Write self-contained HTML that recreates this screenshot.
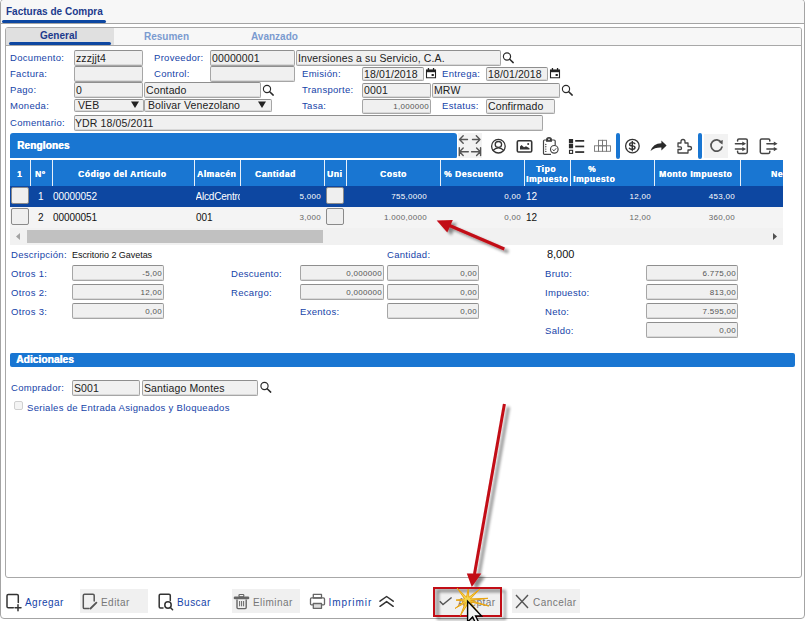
<!DOCTYPE html>
<html><head><meta charset="utf-8">
<style>
*{box-sizing:border-box;margin:0;padding:0}
html,body{width:807px;height:621px;overflow:hidden;background:#fff;font-family:"Liberation Sans",sans-serif;position:relative}
.a{position:absolute}
#outer{left:0;top:-1px;width:805px;height:620px;border:1px solid #a4a4a4;border-radius:4px;background:#fff}
#titlebar{left:0;top:0;width:803px;height:24px;background:#f7f7f7;border-bottom:1px solid #a4a4a4;border-radius:3px 3px 0 0}
.lbl{position:absolute;font-size:9.5px;letter-spacing:0.3px;color:#1543a8;white-space:nowrap;line-height:12px}
.inp{position:absolute;height:16px;border:1px solid #a6a6a6;border-top-color:#8e8e8e;border-radius:2px;background:#f0f0f0;font-size:10.5px;letter-spacing:0.12px;color:#222;line-height:14px;padding-left:1px;white-space:nowrap;overflow:hidden;box-shadow:inset 0 -1px 0 #d8d8d8}
.num{text-align:right;font-size:8px;letter-spacing:0.3px;padding-right:1px;color:#555;line-height:15px}
#panel{left:5px;top:27px;width:797px;height:551px;border:1px solid #a8a8a8;border-radius:3px;background:#fff}
#tabbar{left:0;top:0;width:795px;height:18px;background:#f7f7f7;border-bottom:1px solid #a8a8a8;border-radius:2px 2px 0 0}
.tab{position:absolute;font-size:10px;font-weight:bold;line-height:12px;top:3px}
.hdr{position:absolute;font-size:8.5px;font-weight:bold;color:#fff;letter-spacing:0.55px;text-shadow:0.25px 0 0 #fff;white-space:nowrap;line-height:10px}
.vs{position:absolute;top:160px;width:1px;height:26px;background:#e8f0fa}
.rv{position:absolute;font-size:10px;letter-spacing:-0.05px;white-space:nowrap;line-height:12px}
.sn{position:absolute;font-size:8px;letter-spacing:0.3px;white-space:nowrap;line-height:10px;text-align:right}
.cb{position:absolute;width:18px;height:17px;border:1px solid #8a8a8a;border-radius:2px;background:#efefef}
.btn{position:absolute;font-size:10px;letter-spacing:0.45px;line-height:12px;white-space:nowrap}
svg{position:absolute;overflow:visible}
</style></head><body>
<div id="outer" class="a"></div>
<div id="titlebar" class="a" style="left:1px;top:0"></div>
<div class="a" style="left:6px;top:6px;font-size:10px;font-weight:bold;color:#1c3a8c;line-height:12px;white-space:nowrap">Facturas de Compra</div>
<div class="a" style="left:2px;top:20px;width:104px;height:3px;background:#0d47a1;border-radius:2px"></div>

<div id="panel" class="a">
  <div id="tabbar" class="a"></div>
  <div class="a" style="left:0;top:0;width:108px;height:17px;background:#e0e0e0;border-radius:2px 0 0 0"></div>
  <div class="a" style="left:3px;top:14px;width:102px;height:3px;background:#0d47a1;border-radius:2px"></div>
  <div class="tab" style="left:34px;top:2px;color:#1c3a8c">General</div>
  <div class="tab" style="left:138px;color:#7b9bd0">Resumen</div>
  <div class="tab" style="left:245px;color:#7b9bd0">Avanzado</div>
</div>

<!-- form -->
<div class="lbl" style="left:10px;top:52px">Documento:</div>
<div class="inp" style="left:74px;top:50px;width:69px;height:16px;line-height:14px;">zzzjjt4</div>
<div class="lbl" style="left:154px;top:52px">Proveedor:</div>
<div class="inp" style="left:210px;top:50px;width:85px;height:16px;line-height:14px;">00000001</div>
<div class="inp" style="left:296px;top:50px;width:205px;height:16px;line-height:14px;">Inversiones a su Servicio, C.A.</div>
<div class="lbl" style="left:10px;top:68px">Factura:</div>
<div class="inp" style="left:74px;top:66px;width:69px;height:16px;line-height:14px;"></div>
<div class="lbl" style="left:154px;top:68px">Control:</div>
<div class="inp" style="left:210px;top:66px;width:85px;height:16px;line-height:14px;"></div>
<div class="lbl" style="left:302px;top:68px">Emisión:</div>
<div class="inp" style="left:362px;top:67px;width:62px;height:14px;line-height:12px;">18/01/2018</div>
<div class="lbl" style="left:442px;top:68px">Entrega:</div>
<div class="inp" style="left:486px;top:67px;width:62px;height:14px;line-height:12px;">18/01/2018</div>
<div class="lbl" style="left:10px;top:84px">Pago:</div>
<div class="inp" style="left:74px;top:82px;width:69px;height:16px;line-height:14px;">0</div>
<div class="inp" style="left:144px;top:82px;width:117px;height:16px;line-height:14px;">Contado</div>
<div class="lbl" style="left:302px;top:84px">Transporte:</div>
<div class="inp" style="left:362px;top:83px;width:69px;height:15px;line-height:13px;">0001</div>
<div class="inp" style="left:432px;top:83px;width:128px;height:15px;line-height:13px;">MRW</div>
<div class="lbl" style="left:10px;top:100px">Moneda:</div>
<div class="inp" style="left:74px;top:99px;width:70px;height:13px;line-height:11px;padding-left:3px">VEB</div>
<div class="inp" style="left:144px;top:99px;width:128px;height:13px;line-height:11px;padding-left:3px">Bolivar Venezolano</div>
<div class="lbl" style="left:302px;top:100px">Tasa:</div>
<div class="inp num" style="left:362px;top:99px;width:69px;height:15px;line-height:13px;">1,000000</div>
<div class="lbl" style="left:442px;top:100px">Estatus:</div>
<div class="inp" style="left:486px;top:99px;width:69px;height:15px;line-height:13px;">Confirmado</div>
<div class="lbl" style="left:10px;top:117px">Comentario:</div>
<div class="inp" style="left:74px;top:115px;width:469px;height:16px;line-height:14px;padding-left:0">YDR 18/05/2011</div>

<!-- Renglones -->
<div class="a" style="left:10px;top:133px;width:447px;height:26px;background:#1976d2;border-radius:3px 3px 3px 0"></div>
<div class="a" style="left:17px;top:140px;font-size:10px;font-weight:bold;color:#fff;line-height:12px;letter-spacing:0.15px;text-shadow:0.4px 0 0 #fff">Renglones</div>
<div class="a" style="left:10px;top:158px;width:773px;height:2px;background:#fff"></div>
<div class="a" style="left:10px;top:160px;width:773px;height:26px;background:#1976d2"></div>
<div class="vs" style="left:30px"></div>
<div class="vs" style="left:52px"></div>
<div class="vs" style="left:194px"></div>
<div class="vs" style="left:240px"></div>
<div class="vs" style="left:324px"></div>
<div class="vs" style="left:346px"></div>
<div class="vs" style="left:440px"></div>
<div class="vs" style="left:524px"></div>
<div class="vs" style="left:570px"></div>
<div class="vs" style="left:654px"></div>
<div class="vs" style="left:740px"></div>
<div class="hdr" style="left:17px;top:169px">1</div>
<div class="hdr" style="left:35px;top:169px">Nº</div>
<div class="hdr" style="left:78px;top:169px">Código del Artículo</div>
<div class="hdr" style="left:197px;top:169px">Almacén</div>
<div class="hdr" style="left:255px;top:169px">Cantidad</div>
<div class="hdr" style="left:327px;top:169px">Uni</div>
<div class="hdr" style="left:380px;top:169px">Costo</div>
<div class="hdr" style="left:444px;top:169px">% Descuento</div>
<div class="hdr" style="left:536px;top:164px">Tipo</div>
<div class="hdr" style="left:526px;top:174px">Impuesto</div>
<div class="hdr" style="left:588px;top:164px">%</div>
<div class="hdr" style="left:573px;top:174px">Impuesto</div>
<div class="hdr" style="left:659px;top:169px">Monto Impuesto</div>
<div class="hdr" style="left:771px;top:169px">Ne</div>
<div class="a" style="left:783px;top:133px;width:18px;height:120px;background:#fff"></div>

<div class="a" style="left:10px;top:186px;width:773px;height:21px;background:#0d47a1"></div>
<div class="a" style="left:10px;top:207px;width:773px;height:21px;background:#f4f4f4"></div>
<div class="cb" style="left:11px;top:187px"></div>
<div class="cb" style="left:11px;top:208px"></div>
<div class="cb" style="left:326px;top:187px"></div>
<div class="cb" style="left:326px;top:208px"></div>
<div class="rv" style="left:38px;top:191px;color:#fff">1</div>
<div class="rv" style="left:53px;top:191px;color:#fff">00000052</div>
<div class="rv" style="left:195.5px;top:191px;color:#fff;width:44px;overflow:hidden;letter-spacing:-0.2px">AlcdCentro</div>
<div class="sn" style="left:280px;top:192px;width:41px;color:#fff">5,000</div>
<div class="sn" style="left:360px;top:192px;width:67px;color:#fff">755,0000</div>
<div class="sn" style="left:460px;top:192px;width:61px;color:#fff">0,00</div>
<div class="rv" style="left:526px;top:191px;color:#fff;font-size:10px">12</div>
<div class="sn" style="left:590px;top:192px;width:61px;color:#fff">12,00</div>
<div class="sn" style="left:670px;top:192px;width:65px;color:#fff">453,00</div>

<div class="rv" style="left:38px;top:212px;color:#111">2</div>
<div class="rv" style="left:53px;top:212px;color:#111">00000051</div>
<div class="rv" style="left:196px;top:212px;color:#111">001</div>
<div class="sn" style="left:280px;top:213px;width:41px;color:#666">3,000</div>
<div class="sn" style="left:360px;top:213px;width:67px;color:#666">1.000,0000</div>
<div class="sn" style="left:460px;top:213px;width:61px;color:#666">0,00</div>
<div class="rv" style="left:526px;top:212px;color:#111;font-size:10px">12</div>
<div class="sn" style="left:590px;top:213px;width:61px;color:#666">12,00</div>
<div class="sn" style="left:670px;top:213px;width:65px;color:#666">360,00</div>

<div class="a" style="left:10px;top:228px;width:773px;height:17px;background:#f1f1f1"></div>
<div class="a" style="left:27px;top:230px;width:296px;height:13px;background:#c1c1c1"></div>
<svg style="left:0;top:0" width="807" height="621"><path d="M16 236.5 L20 233 L20 240 Z" fill="#a3a3a3"/><path d="M777 236.5 L773 233 L773 240 Z" fill="#505050"/></svg>

<!-- totals -->
<div class="lbl" style="left:11px;top:249px">Descripción:</div>
<div class="rv" style="left:72px;top:249px;color:#111;font-size:9px">Escritorio 2 Gavetas</div>
<div class="lbl" style="left:387px;top:249px">Cantidad:</div>
<div class="rv" style="left:547px;top:248px;color:#111;font-size:11px">8,000</div>
<div class="lbl" style="left:11px;top:268px">Otros 1:</div>
<div class="inp num" style="left:72px;top:265px;width:92px">-5,00</div>
<div class="lbl" style="left:11px;top:287px">Otros 2:</div>
<div class="inp num" style="left:72px;top:284px;width:92px">12,00</div>
<div class="lbl" style="left:11px;top:306px">Otros 3:</div>
<div class="inp num" style="left:72px;top:303px;width:92px">0,00</div>
<div class="lbl" style="left:231px;top:268px">Descuento:</div>
<div class="inp num" style="left:300px;top:265px;width:84px">0,000000</div>
<div class="inp num" style="left:387px;top:265px;width:92px">0,00</div>
<div class="lbl" style="left:231px;top:287px">Recargo:</div>
<div class="inp num" style="left:300px;top:284px;width:84px">0,000000</div>
<div class="inp num" style="left:387px;top:284px;width:92px">0,00</div>
<div class="lbl" style="left:300px;top:306px">Exentos:</div>
<div class="inp num" style="left:387px;top:303px;width:92px">0,00</div>
<div class="lbl" style="left:545px;top:268px">Bruto:</div>
<div class="inp num" style="left:646px;top:265px;width:92px">6.775,00</div>
<div class="lbl" style="left:545px;top:287px">Impuesto:</div>
<div class="inp num" style="left:646px;top:284px;width:92px">813,00</div>
<div class="lbl" style="left:545px;top:306px">Neto:</div>
<div class="inp num" style="left:646px;top:303px;width:92px">7.595,00</div>
<div class="lbl" style="left:545px;top:325px">Saldo:</div>
<div class="inp num" style="left:646px;top:322px;width:92px">0,00</div>

<!-- adicionales -->
<div class="a" style="left:10px;top:353px;width:785px;height:14px;background:#1976d2;border-radius:2px"></div>
<div class="a" style="left:16px;top:354px;font-size:10.3px;font-weight:bold;color:#fff;line-height:12px;text-shadow:0.4px 0 0 #fff">Adicionales</div>
<div class="lbl" style="left:11px;top:382px">Comprador:</div>
<div class="inp" style="left:72px;top:380px;width:68px">S001</div>
<div class="inp" style="left:142px;top:380px;width:116px">Santiago Montes</div>
<div class="a" style="left:14px;top:401px;width:9px;height:9px;border:1px solid #d0d0d0;border-radius:2px;background:#f4f4f4"></div>
<div class="lbl" style="left:27px;top:402px">Seriales de Entrada Asignados y Bloqueados</div>

<!-- footer -->
<div class="a" style="left:434px;top:588px;width:67px;height:28px;background:#f0f0f0;box-shadow:inset 3px 3px 4px rgba(0,0,0,0.18)"></div>
<div class="a" style="left:80px;top:589px;width:68px;height:24px;background:#f0f0f0"></div>
<div class="a" style="left:232px;top:589px;width:68px;height:24px;background:#f0f0f0"></div>
<div class="a" style="left:512px;top:589px;width:68px;height:24px;background:#f0f0f0"></div>
<div class="btn" style="left:25px;top:596.5px;color:#1543a8">Agregar</div>
<div class="btn" style="left:101px;top:596.5px;color:#777">Editar</div>
<div class="btn" style="left:177px;top:596.5px;color:#1543a8">Buscar</div>
<div class="btn" style="left:253px;top:596.5px;color:#777">Eliminar</div>
<div class="btn" style="left:328.5px;top:596.5px;color:#1543a8;letter-spacing:0.95px">Imprimir</div>
<div class="btn" style="left:458px;top:596.5px;color:#777">Aceptar</div>
<div class="btn" style="left:533px;top:596.5px;color:#777">Cancelar</div>

<!-- toolbar bgs -->
<div class="a" style="left:458px;top:133px;width:24px;height:25px;background:#f2f2f2"></div>
<div class="a" style="left:704px;top:134px;width:24px;height:24px;background:#f2f2f2"></div>
<div class="a" style="left:616px;top:133px;width:4px;height:26px;background:#1976d2;border-radius:2px"></div>
<div class="a" style="left:698px;top:133px;width:4px;height:26px;background:#1976d2;border-radius:2px"></div>
<svg style="left:0;top:0" width="807" height="621" viewBox="0 0 807 621">
<defs>
 <g id="srch"><circle cx="4" cy="3.5" r="3.6" fill="none" stroke="#2a2a2a" stroke-width="1.15"/><path d="M6.7 6.2 L10.2 9.6" stroke="#2a2a2a" stroke-width="1.5" stroke-linecap="round"/></g>
 <g id="cal"><path d="M0.5 2.2 H9.5 V9.7 H0.5 Z" fill="none" stroke="#222" stroke-width="1.1"/><rect x="0" y="1.6" width="10" height="2.6" fill="#222"/><rect x="1.8" y="0" width="1.3" height="2" fill="#222"/><rect x="6.9" y="0" width="1.3" height="2" fill="#222"/><rect x="5.6" y="6" width="2.2" height="2" fill="#222"/></g>
 <filter id="sh" x="-50%" y="-50%" width="200%" height="200%"><feGaussianBlur in="SourceAlpha" stdDeviation="1.6"/><feOffset dx="3" dy="3"/><feComponentTransfer><feFuncA type="linear" slope="0.45"/></feComponentTransfer><feMerge><feMergeNode/><feMergeNode in="SourceGraphic"/></feMerge></filter>
</defs>
<use href="#srch" x="503" y="53"/>
<use href="#srch" x="263" y="85.5"/>
<use href="#srch" x="562" y="85.5"/>
<use href="#srch" x="260.5" y="382.5"/>
<use href="#cal" x="426" y="68"/>
<use href="#cal" x="550" y="68"/>
<!-- select arrows -->
<path d="M131 101.5 H139 L135 108 Z" fill="#222"/>
<path d="M258 101.5 H266 L262 108 Z" fill="#222"/>

<!-- toolbar icons -->
<g stroke="#555" stroke-width="1.4" fill="none" stroke-linecap="round" stroke-linejoin="round">
 <path d="M459.5 139.5 H467.5 M463.2 135.8 L459.5 139.5 L463.2 143.2"/>
 <path d="M472.5 139.5 H480 M476.3 135.8 L480 139.5 L476.3 143.2"/>
 <path d="M459.3 147.8 V155.6 M459.5 151.7 H468.3 M463.2 148 L459.5 151.7 L463.2 155.4"/>
 <path d="M480.6 147.8 V155.6 M471.6 151.7 H480.3 M476.6 148 L480.3 151.7 L476.6 155.4"/>
</g>
<g stroke="#333" stroke-width="1.3" fill="none">
 <circle cx="498.4" cy="146.2" r="6.8"/>
 <ellipse cx="498.4" cy="144.4" rx="3.2" ry="2.9"/>
 <path d="M492.6 150.8 Q498.4 145 504.2 150.8"/>
 <rect x="517.3" y="140.8" width="14.4" height="11.2" rx="1.3" stroke-width="1.6"/>
</g>
<path d="M520 149.5 V146.5 L521.5 145 L524 147.3 L526 146.2 L529.5 148.2 V149.5 Z" fill="#333"/>
<circle cx="528.2" cy="144" r="1" fill="#333"/>
<g stroke="#444" stroke-width="1.2" fill="none">
 <path d="M547 140 H544.5 Q543.5 140 543.5 141 V153.5 Q543.5 154.3 544.5 154.3 H551"/>
 <path d="M551 140 H554 Q555.2 140 555.2 141 V145"/>
 <path d="M546.6 141.2 V139.6 Q546.6 137.6 549 137.6 Q551.4 137.6 551.4 139.6 V141.2 Z" fill="#333"/><circle cx="549" cy="139.4" r="0.8" fill="#fff" stroke="none"/>
 <circle cx="554.3" cy="149.3" r="3.8"/>
 <path d="M552.5 149.5 L554 150.8 L556.2 148.3" stroke-width="1"/>
</g>
<g fill="#444"><circle cx="545.8" cy="144.5" r="0.7"/><circle cx="545.8" cy="146.8" r="0.7"/><circle cx="545.8" cy="149.1" r="0.7"/><circle cx="545.8" cy="151.4" r="0.7"/></g>
<g fill="#2a2a2a">
 <rect x="568.9" y="139" width="4.2" height="4.3"/>
 <rect x="568.9" y="143.9" width="4.2" height="4.4"/>
 <rect x="575.2" y="140" width="9" height="1.7"/>
 <rect x="575.2" y="145.6" width="9" height="1.7"/>
 <rect x="575.2" y="151.2" width="9" height="1.7"/>
</g>
<rect x="569.5" y="150.3" width="3.1" height="3.1" fill="none" stroke="#2a2a2a" stroke-width="1.1"/>
<g stroke="#777" stroke-width="0.9" fill="none">
 <rect x="598.5" y="140.3" width="4" height="5.5"/><rect x="602.5" y="140.3" width="4" height="5.5"/>
 <rect x="594.5" y="145.8" width="4" height="5.5"/><rect x="598.5" y="145.8" width="4" height="5.5"/><rect x="602.5" y="145.8" width="4" height="5.5"/><rect x="606.5" y="145.8" width="4" height="5.5"/>
</g>
<circle cx="632.4" cy="146.1" r="6.8" fill="none" stroke="#333" stroke-width="1.3"/>
<path d="M634.8 143.6 Q634 142.6 632.3 142.6 Q629.6 142.6 629.6 144.4 Q629.6 145.7 632.3 145.9 Q635 146.1 635 147.6 Q635 149.4 632.3 149.4 Q630.4 149.4 629.4 148.2 M632.3 141.4 V150.8" fill="none" stroke="#333" stroke-width="1.45" stroke-linecap="round"/>
<path d="M650.5 151 Q653 143.5 661.4 143.2 V140.5 L666.6 145.5 L661.4 150.6 V147.6 Q655 147.3 650.5 151 Z" fill="#2a2a2a"/>
<path d="M678 143 H681 V141.5 Q681 139.5 683 139.5 Q685 139.5 685 141.5 V143 H688 V146.5 H689.5 Q691.5 146.5 691.5 148.3 Q691.5 150 689.5 150 H688 V153 H678 V149.5 H680.5 Q681.5 149.5 681.5 148.2 Q681.5 146.8 680.5 146.8 H678 Z" fill="none" stroke="#444" stroke-width="1.3" stroke-linejoin="round"/>
<g stroke="#555" stroke-width="1.7" fill="none" stroke-linecap="round">
 <path d="M721.3 142.5 A5.6 5.6 0 1 0 722 147"/>
</g>
<path d="M718.5 141.8 L722.8 140 L722.5 144.6 Z" fill="#555"/>
<g stroke="#444" stroke-width="1.5" fill="none" stroke-linecap="round" stroke-linejoin="round">
 <path d="M737.6 141 V140.2 Q737.6 138.9 738.9 138.9 H745.9 Q747.3 138.9 747.3 140.3 V152 Q747.3 153.4 745.9 153.4 H738.9 Q737.6 153.4 737.6 152.1 V151.2"/>
 <path d="M735.4 143.7 H743 M735.4 149.1 H743"/>
 <path d="M769.8 141 V140.2 Q769.8 138.9 768.5 138.9 H761.7 Q760.3 138.9 760.3 140.3 V152 Q760.3 153.4 761.7 153.4 H768.5 Q769.8 153.4 769.8 152.1 V151.2"/>
 <path d="M766.9 143.7 H774.5 M766.9 149.1 H774.5"/>
</g>
<g fill="#444"><path d="M742.3 141.6 L746.1 143.7 L742.3 145.8 Z M742.3 147 L746.1 149.1 L742.3 151.2 Z M773.8 141.6 L777.6 143.7 L773.8 145.8 Z M773.8 147 L777.6 149.1 L773.8 151.2 Z"/></g>

<!-- footer icons -->
<g stroke="#333" stroke-width="1.5" fill="none" stroke-linecap="round" stroke-linejoin="round">
 <path d="M13.3 607.8 H8.3 Q7 607.8 7 606.5 V595.8 Q7 594.5 8.3 594.5 H17 Q18.3 594.5 18.3 595.8 V602.5"/>
 <path d="M15 607.8 H21 M18 604.8 V610.8"/>
</g>
<g stroke="#555" stroke-width="1.5" fill="none" stroke-linecap="round" stroke-linejoin="round">
 <path d="M89 608.6 H84.5 Q83.3 608.6 83.3 607.4 V595.4 Q83.3 594.2 84.5 594.2 H93 Q94.2 594.2 94.2 595.4 V601"/>
 <path d="M90.5 608.5 L96.4 602.6" stroke-width="1.8"/>
</g>
<g stroke="#333" stroke-width="1.5" fill="none" stroke-linecap="round" stroke-linejoin="round">
 <path d="M163 608 H160.4 Q159.2 608 159.2 606.8 V595.4 Q159.2 594.2 160.4 594.2 H169 Q170.3 594.2 170.3 595.4 V600.5"/>
 <circle cx="168" cy="605" r="3.2"/>
 <path d="M170.4 607.5 L172.6 609.8"/>
</g>
<g stroke="#666" fill="none">
 <rect x="239" y="594.5" width="4.8" height="2.4" rx="0.8" stroke-width="1.2"/>
 <path d="M235 597.9 H248" stroke-width="2.6" stroke-linecap="round"/>
 <path d="M237 599.5 V607.6 Q237 608.6 238 608.6 H245.2 Q246.2 608.6 246.2 607.6 V599.5" stroke-width="1.4"/>
 <path d="M239.6 601 V606.3 M241.6 601 V606.3 M243.6 601 V606.3" stroke-width="1"/>
</g>
<g stroke="#666" stroke-width="1.3" fill="none" stroke-linejoin="round">
 <rect x="313.3" y="594.4" width="8.2" height="3.6"/>
 <path d="M313 604.8 H311.3 Q310.5 604.8 310.5 604 V599 Q310.5 597.9 311.6 597.9 H323.4 Q324.5 597.9 324.5 599 V604 Q324.5 604.8 323.7 604.8 H322"/>
 <rect x="313.3" y="603.5" width="8.2" height="4.8" fill="#ddd"/>
</g>
<g stroke="#333" stroke-width="1.5" fill="none" stroke-linecap="round" stroke-linejoin="round">
 <path d="M380 601.2 L386.6 596.5 L393.2 601.2"/>
 <path d="M380 606.3 L386.6 601.6 L393.2 606.3"/>
</g>
<path d="M516 595 L528 608 M528 595 L516 608" stroke="#555" stroke-width="1.4"/>
<path d="M439.8 601.3 L443 604.6 L451.6 597.5" stroke="#555" stroke-width="1.4" fill="none"/>
</svg>

<!-- Aceptar red box -->
<svg style="left:0;top:0" width="807" height="621" viewBox="0 0 807 621">
<defs>
 <filter id="sh2" x="-50%" y="-50%" width="200%" height="200%"><feGaussianBlur in="SourceAlpha" stdDeviation="1.8"/><feOffset dx="4" dy="3"/><feComponentTransfer><feFuncA type="linear" slope="0.45"/></feComponentTransfer><feMerge><feMergeNode/><feMergeNode in="SourceGraphic"/></feMerge></filter>
</defs>
<g filter="url(#sh2)">
 <path d="M504.3 249 L446 224" stroke="#c20a14" stroke-width="3" stroke-linecap="butt"/>
 <path d="M436.7 220.5 L452.8 220.1 L447.3 232.5 Z" fill="#c20a14"/>
</g>
<g filter="url(#sh2)">
 <path d="M504.4 404 L474.5 574" stroke="#c20a14" stroke-width="3"/>
 <path d="M471.8 587 L466.8 573.5 L481.3 573.5 Z" fill="#c20a14"/>
</g>
<rect x="434" y="588" width="67" height="28" fill="none" stroke="#c20a14" stroke-width="2" filter="url(#sh2)"/>
<!-- star -->
<path d="M456.0 600.1 L464.6 598.9 L457.2 588.2 L466.5 597.2 L468.2 589.1 L468.9 597.3 L479.8 589.1 L470.4 598.9 L487.9 598.3 L470.7 600.5 L488.7 606.0 L470.2 601.9 L478.0 612.0 L468.0 603.4 L460.4 615.6 L465.4 602.6 L455.1 608.4 L464.4 601.1 Z" fill="#f5d54a" stroke="#e8a412" stroke-width="1" stroke-linejoin="miter"/>
<!-- cursor -->
<path d="M467.6 601.3 L467.6 622 L472.6 617 L476.6 625 L479.6 624 L475.6 616 L481.6 616 Z" fill="#f4f4f4" stroke="#000" stroke-width="1.4" stroke-linejoin="miter"/>
</svg>
</body></html>
